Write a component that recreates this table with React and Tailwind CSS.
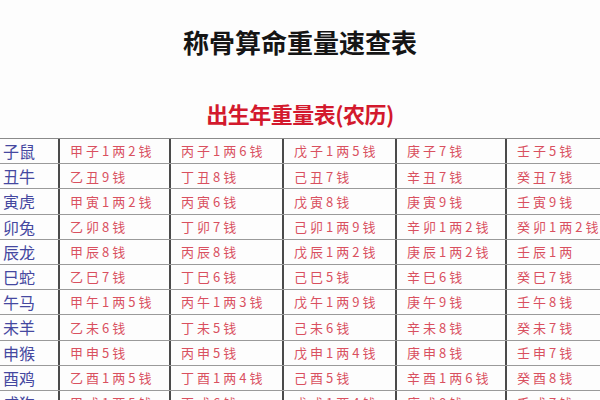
import React from "react";

const rows = [
  ["子鼠", "甲子1两2钱", "丙子1两6钱", "戊子1两5钱", "庚子7钱", "壬子5钱"],
  ["丑牛", "乙丑9钱", "丁丑8钱", "己丑7钱", "辛丑7钱", "癸丑7钱"],
  ["寅虎", "甲寅1两2钱", "丙寅6钱", "戊寅8钱", "庚寅9钱", "壬寅9钱"],
  ["卯兔", "乙卯8钱", "丁卯7钱", "己卯1两9钱", "辛卯1两2钱", "癸卯1两2钱"],
  ["辰龙", "甲辰8钱", "丙辰8钱", "戊辰1两2钱", "庚辰1两2钱", "壬辰1两"],
  ["巳蛇", "乙巳7钱", "丁巳6钱", "己巳5钱", "辛巳6钱", "癸巳7钱"],
  ["午马", "甲午1两5钱", "丙午1两3钱", "戊午1两9钱", "庚午9钱", "壬午8钱"],
  ["未羊", "乙未6钱", "丁未5钱", "己未6钱", "辛未8钱", "癸未7钱"],
  ["申猴", "甲申5钱", "丙申5钱", "戊申1两4钱", "庚申8钱", "壬申7钱"],
  ["酉鸡", "乙酉1两5钱", "丁酉1两4钱", "己酉5钱", "辛酉1两6钱", "癸酉8钱"],
  ["戌狗", "甲戌1两5钱", "丙戌6钱", "戊戌1两4钱", "庚戌8钱", "壬戌7钱"],
];

const font = { fontFamily: '"Noto Sans CJK SC", sans-serif' };

function Cell({ text }) {
  return (
    <div className="border-r-2 border-[#4a4a4a] pl-[10px] flex items-center text-[13px] tracking-[3px] text-[#d9505f] whitespace-nowrap">
      {text}
    </div>
  );
}

export default function App() {
  return (
    <div
      className="w-[600px] h-[400px] overflow-hidden bg-[#fdfdfd] flex flex-col"
      style={font}
    >
      <div className="pt-[29px] text-center text-[26px] leading-[26px] font-bold text-[#151515]">
        称骨算命重量速查表
      </div>
      <div className="mt-[47px] text-center text-[22px] leading-[22px] font-bold text-[#d3192d] tracking-[-0.5px]">
        出生年重量表(农历)
      </div>
      <div className="mt-[14px] w-[620px] border-t border-[#8a8a8a]">
        {rows.map((r) => (
          <div
            key={r[0]}
            className="grid grid-cols-[60px_111px_113px_113px_110px_113px] h-[25.2px] border-b border-[#9a9a9a]"
          >
            <div className="border-r-2 border-[#4a4a4a] pl-[3px] flex items-center text-[16px] text-[#4548a0]">
              {r[0]}
            </div>
            {r.slice(1).map((t, i) => (
              <Cell key={i} text={t} />
            ))}
          </div>
        ))}
      </div>
    </div>
  );
}
